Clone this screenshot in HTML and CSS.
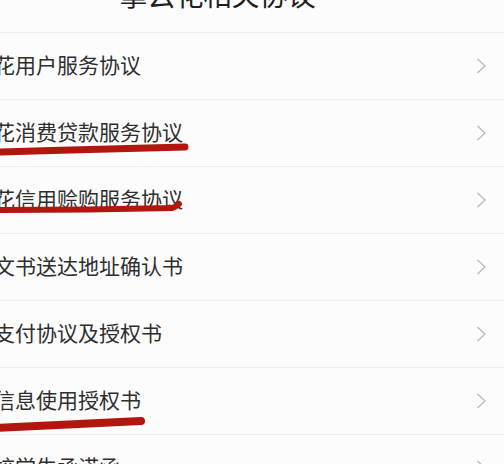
FILE: index.html
```html
<!DOCTYPE html>
<html lang="zh-CN">
<head>
  <meta charset="UTF-8">
  <title>掌云花相关协议</title>
  <link rel="stylesheet" href="styles.css">
</head>
<body>

<div id="page">
  <div class="header">
    <div class="title">掌云花相关协议</div>
  </div>

  <div class="list">
    <div class="row"><span class="name">掌云花用户服务协议</span><svg class="arrow" width="11" height="16" viewBox="0 0 11 16"><polyline points="1.5,1 9,8 1.5,15"/></svg></div>
    <div class="row"><span class="name">掌云花消费贷款服务协议</span><svg class="arrow" width="11" height="16" viewBox="0 0 11 16"><polyline points="1.5,1 9,8 1.5,15"/></svg></div>
    <div class="row"><span class="name">掌云花信用赊购服务协议</span><svg class="arrow" width="11" height="16" viewBox="0 0 11 16"><polyline points="1.5,1 9,8 1.5,15"/></svg></div>
    <div class="row"><span class="name">法律文书送达地址确认书</span><svg class="arrow" width="11" height="16" viewBox="0 0 11 16"><polyline points="1.5,1 9,8 1.5,15"/></svg></div>
    <div class="row"><span class="name">委托支付协议及授权书</span><svg class="arrow" width="11" height="16" viewBox="0 0 11 16"><polyline points="1.5,1 9,8 1.5,15"/></svg></div>
    <div class="row"><span class="name">个人信息使用授权书</span><svg class="arrow" width="11" height="16" viewBox="0 0 11 16"><polyline points="1.5,1 9,8 1.5,15"/></svg></div>
    <div class="row"><span class="name">非在校学生承诺函</span><svg class="arrow" width="11" height="16" viewBox="0 0 11 16"><polyline points="1.5,1 9,8 1.5,15"/></svg></div>
  </div>

  <!-- hand-drawn red marks under the important items -->
  <svg class="marks" width="504" height="464" viewBox="0 0 504 464">
    <path d="M-4,152 C60,150 130,149 185,147" stroke-width="7"/>
    <path d="M-4,210 C60,210 130,209 172,208 C176,207 178,205 179,204" stroke-width="6"/>
    <path d="M-4,428 C50,425 100,423 141,421" stroke-width="8"/>
  </svg>
</div>

</body>
</html>
```

FILE: styles.css
```css
html, body{
  margin: 0;
  padding: 0;
}
body{
  background: #fcfcfc;
  font-family: "Noto Sans CJK SC", "Noto Sans", sans-serif;
  color: #2e2e2e;
}
#page{
  position: relative;
  width: 504px;
  height: 464px;
  overflow: hidden;
}

.header{
  display: flow-root;
  box-sizing: border-box;
  height: 33px;
  border-bottom: 1px solid #ececec;
  padding-right: 69px;
  text-align: center;
}
.title{
  margin-top: -20px;
  font-size: 28px;
  line-height: 28px;
  color: #1e1e1e;
}

.list{
  margin-left: -48px;
}
.row{
  box-sizing: border-box;
  height: 67px;
  border-bottom: 1px solid #ececec;
  padding: 0 17px 4px 0;
  display: flex;
  align-items: center;
  justify-content: space-between;
}
.name{
  font-size: 21px;
  white-space: nowrap;
}
.arrow{
  margin-top: 4px;
  fill: none;
  stroke: #bcbcbc;
  stroke-width: 1.4;
}

.marks{
  position: absolute;
  left: 0;
  top: 0;
  pointer-events: none;
}
.marks path{
  fill: none;
  stroke: #b3160f;
  stroke-linecap: round;
}
```
